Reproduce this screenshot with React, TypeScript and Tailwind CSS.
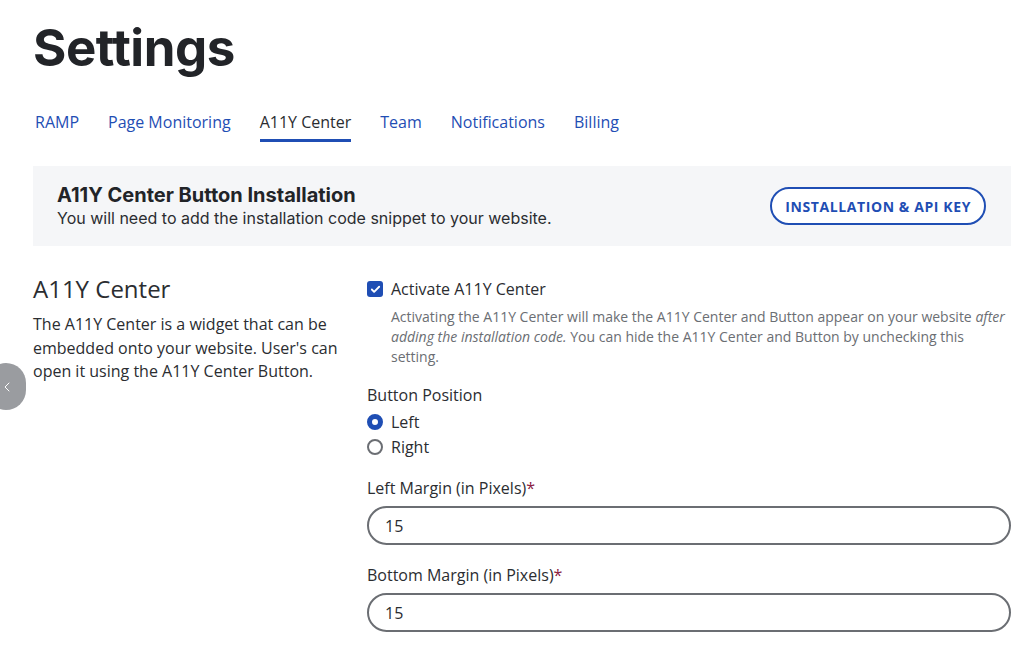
import { Check, ChevronLeft } from 'lucide-react';

const tabs = ['RAMP', 'Page Monitoring', 'A11Y Center', 'Team', 'Notifications', 'Billing'];

const App = () => {
  return (
    <div className="relative min-h-[663px] bg-white pl-[33px] pr-[13px] pt-[16px] text-[#2b2d31] font-['Open_Sans',sans-serif]">
      <h1 className="text-[51px] leading-[64px] font-bold tracking-[-0.5px] text-[#222428] font-['Inter',sans-serif]">
        Settings
      </h1>

      <nav className="mt-[30px] flex gap-[29px] pl-[2px]">
        {tabs.map((tab) => (
          <a
            key={tab}
            className={`pb-[5px] border-b-[3px] text-[16px] leading-[24px] ${
              tab === 'A11Y Center' ? 'border-[#1f4eb4] text-[#2b2d31]' : 'border-transparent text-[#1f4eb4]'
            }`}
          >
            {tab}
          </a>
        ))}
      </nav>

      <section className="mt-[24px] flex h-[80px] items-center justify-between bg-[#f5f6f8] pl-[24px] pr-[25px]">
        <div className="font-['Inter',sans-serif]">
          <h2 className="text-[20px] leading-[24px] font-bold text-[#222428]">A11Y Center Button Installation</h2>
          <p className="text-[16px] leading-[22px] text-[#2b2d31]">You will need to add the installation code snippet to your website.</p>
        </div>
        <button className="h-[38px] rounded-full border-2 border-[#1f4eb4] bg-white px-[13px] text-[14px] font-bold tracking-[0.6px] text-[#1f4eb4]">
          INSTALLATION &amp; API KEY
        </button>
      </section>

      <div className="mt-[28px] grid grid-cols-[310px_1fr] gap-[24px]">
        <div>
          <h3 className="text-[24px] leading-[30px] text-[#2b2d31]">A11Y Center</h3>
          <p className="mt-[9px] text-[16px] leading-[23.5px] text-[#2b2d31]">
            The A11Y Center is a widget that can be embedded onto your website. User's can open it using the A11Y Center Button.
          </p>
        </div>

        <div className="pt-[3px]">
          <label className="flex items-center gap-[8px]">
            <span className="flex h-[16px] w-[16px] items-center justify-center rounded-[3px] bg-[#1f4eb4]">
              <Check className="h-[11px] w-[11px] text-white" strokeWidth={4} />
            </span>
            <span className="text-[16px] leading-[24px]">Activate A11Y Center</span>
          </label>
          <p className="ml-[24px] mt-[6px] text-[14px] leading-[20px] text-[#6b6e73]">
            Activating the A11Y Center will make the A11Y Center and Button appear on your website <em>after adding the installation code.</em> You can hide the A11Y Center and Button by unchecking this setting.
          </p>

          <p className="mt-[16px] text-[16px] leading-[24px]">Button Position</p>
          <div className="mt-[2px] flex flex-col">
            <label className="flex h-[25px] items-center gap-[8px]">
              <span className="h-[16px] w-[16px] rounded-full border-[5px] border-[#1f4eb4] bg-white" />
              <span className="text-[16px]">Left</span>
            </label>
            <label className="flex h-[25px] items-center gap-[8px]">
              <span className="h-[16px] w-[16px] rounded-full border-2 border-[#6b6e73] bg-white" />
              <span className="text-[16px]">Right</span>
            </label>
          </div>

          <p className="mt-[17px] text-[16px] leading-[24px]">
            Left Margin (in Pixels)<span className="text-[#8a2040]">*</span>
          </p>
          <div className="mt-[6px] flex h-[39px] items-center rounded-full border-2 border-[#6b6e73] px-[16px] text-[16px]">15</div>

          <p className="mt-[18px] text-[16px] leading-[24px]">
            Bottom Margin (in Pixels)<span className="text-[#8a2040]">*</span>
          </p>
          <div className="mt-[6px] flex h-[39px] items-center rounded-full border-2 border-[#6b6e73] px-[16px] text-[16px]">15</div>
        </div>
      </div>

      <button className="absolute left-[-14px] top-[363px] flex h-[47px] w-[40px] items-center justify-end rounded-full bg-[#9a9ca0] pr-[11px]">
        <ChevronLeft className="h-[16px] w-[16px] text-white" strokeWidth={1.5} />
      </button>
    </div>
  );
};

export default App;
